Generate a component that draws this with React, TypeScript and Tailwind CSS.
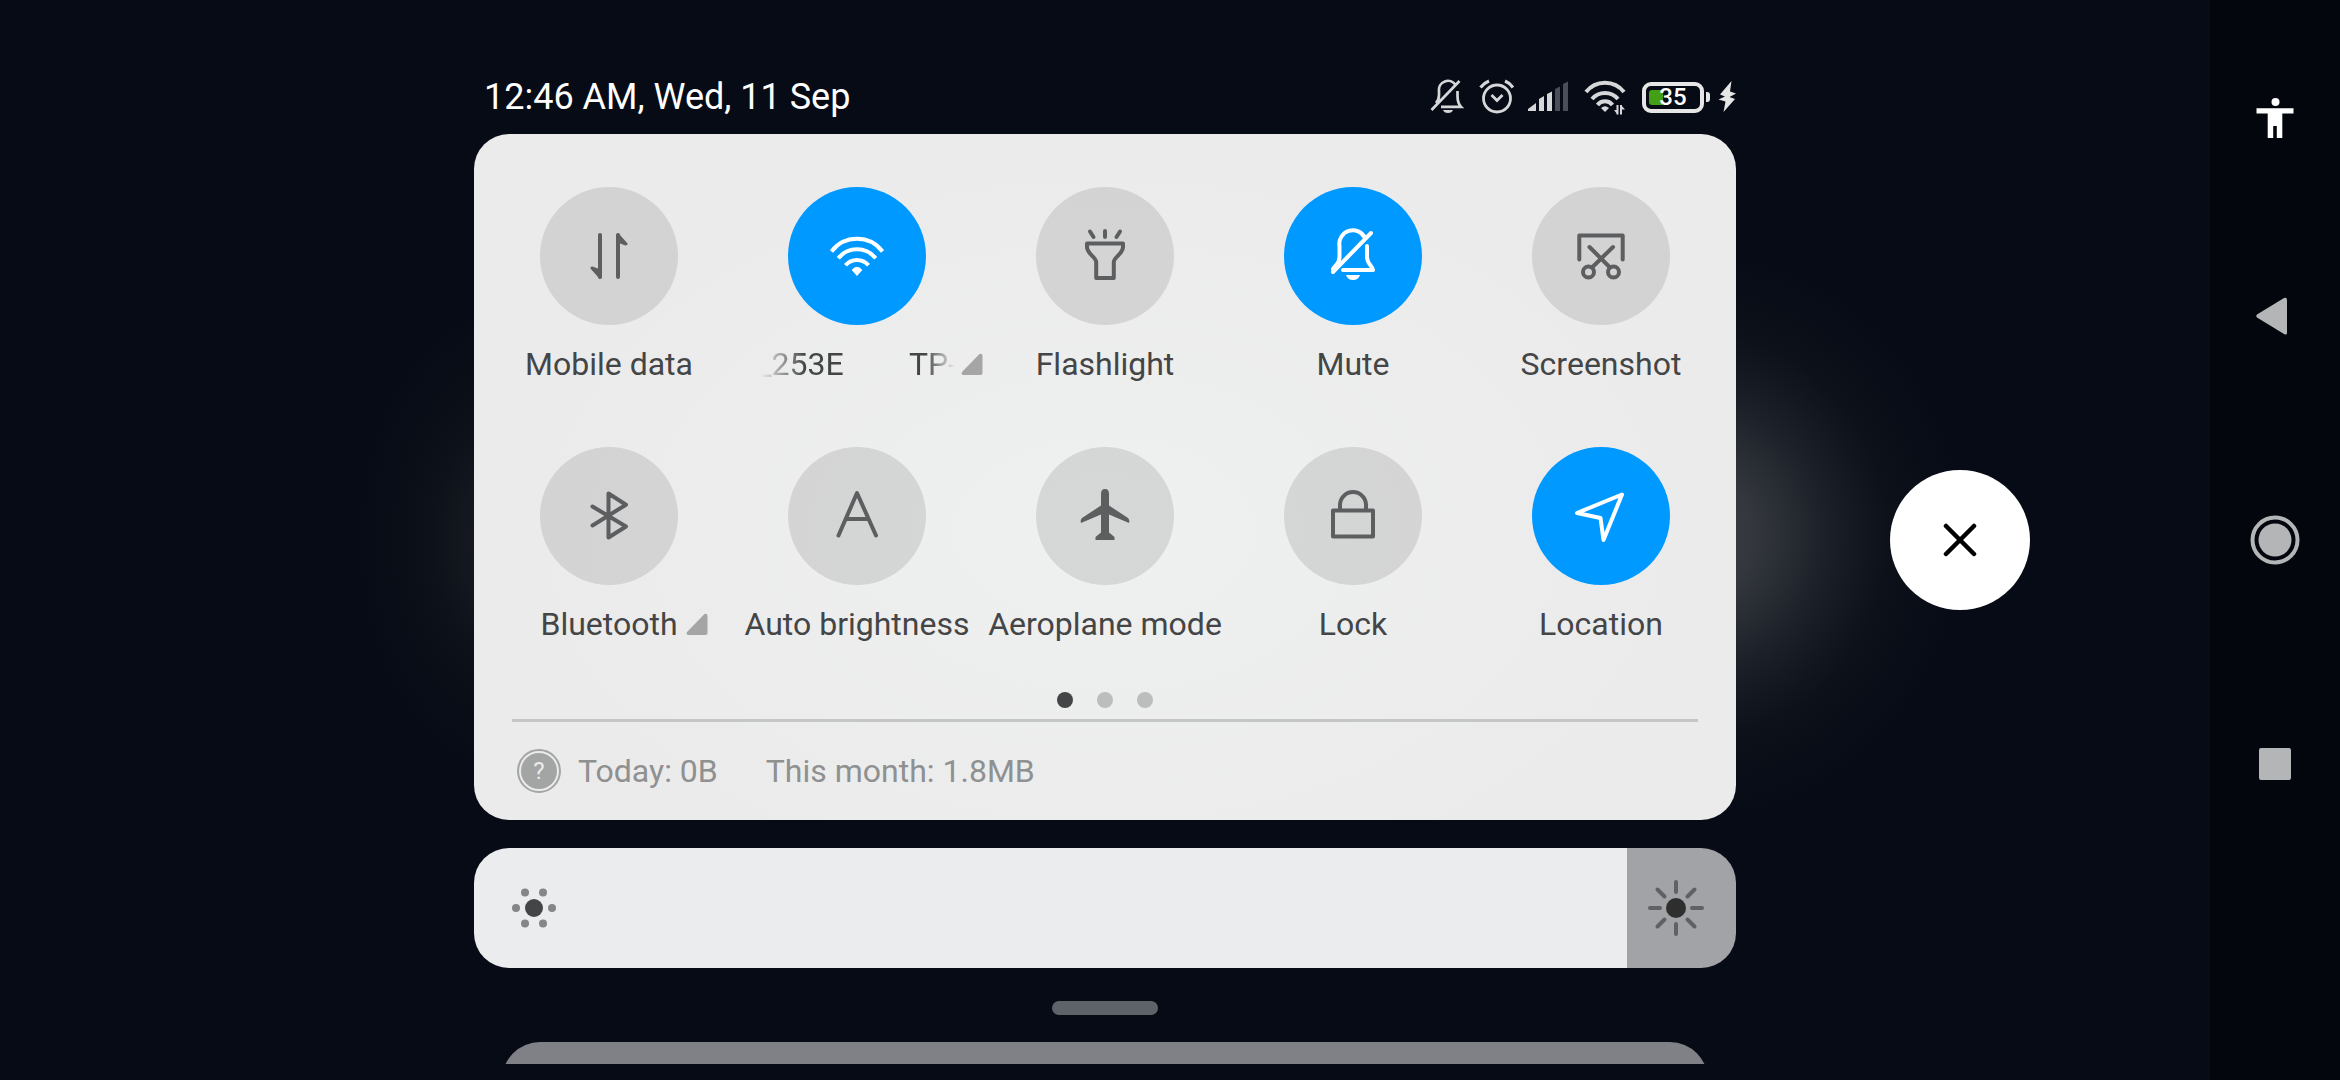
import { useState } from 'react';
import type { ReactNode } from 'react';

type Tile = {
  id: string;
  label: string;
  icon: ReactNode;
  expandable?: boolean;
};

const tiles: Tile[] = [
  {
    id: 'mobile-data',
    label: 'Mobile data',
    icon: (
      <>
        <path d="M21 9V51M39 9V51" />
        <path d="M21 51L13 42L21 45ZM39 9L47 18L39 15Z" fill="currentColor" strokeWidth="3" />
      </>
    ),
  },
  {
    id: 'wifi',
    label: 'TP-LINK_253E',
    expandable: true,
    icon: (
      <>
        <path d="M4.500 25.500A32 32 0 0 1 55.500 25.500" strokeLinecap="butt" />
        <path d="M11.300 32.300A24 24 0 0 1 48.700 32.300" strokeLinecap="butt" />
        <path d="M18.500 39.300A15 15 0 0 1 41.500 39.300" strokeLinecap="butt" />
        <path d="M24.700 44Q30 37.500 35.300 44L30 50Z" fill="currentColor" stroke="none" />
      </>
    ),
  },
  {
    id: 'flashlight',
    label: 'Flashlight',
    icon: (
      <>
        <path d="M12 17.500H48V21C48 28 38.800 31 38.800 36V52H21.200V36C21.200 31 12 28 12 21Z" />
        <path d="M15 5.500L18.500 11M30 5V11M45 5.500L41.500 11" />
      </>
    ),
  },
  {
    id: 'mute',
    label: 'Mute',
    icon: (
      <>
        <path d="M10 43C12 39 16.500 38 16.500 31V20A13.500 13.500 0 0 1 42 12" />
        <path d="M44 20V31C44 38 49.500 40 50 44H20" />
        <path d="M48 7L10 46" />
        <path d="M23 49H37Q35.500 54 30 54T23 49Z" fill="currentColor" stroke="none" />
      </>
    ),
  },
  {
    id: 'screenshot',
    label: 'Screenshot',
    icon: (
      <>
        <path d="M8.300 33.500V9.500H51.700V33.500" />
        <path d="M42 21L21 41.500M18.500 21L39 41.500" />
        <circle cx="17.500" cy="46" r="5.500" />
        <circle cx="42.500" cy="46" r="5.500" />
      </>
    ),
  },
  {
    id: 'bluetooth',
    label: 'Bluetooth',
    expandable: true,
    icon: <path d="M13.500 20.500L47 40.500L29.500 51.500V7.500L47 18.700L13.500 39.500" />,
  },
  {
    id: 'auto-brightness',
    label: 'Auto brightness',
    icon: <path d="M11.500 49.500L30 7L49 49.500M19 33H41.500" />,
  },
  {
    id: 'aeroplane',
    label: 'Aeroplane mode',
    icon: (
      <path
        d="M30 3Q34 3 34 8V19.500L53 32Q55 34 54 37L34 28.500V46.500L39.500 51V54H20.500V51L26 46.500V28.500L6 37Q5 34 7 32L26 19.500V8Q26 3 30 3Z"
        fill="currentColor"
        stroke="none"
      />
    ),
  },
  {
    id: 'lock',
    label: 'Lock',
    icon: (
      <>
        <rect x="10" y="24.500" width="40" height="26" />
        <path d="M17 24V19A13 13 0 0 1 43 19V24" />
      </>
    ),
  },
  {
    id: 'location',
    label: 'Location',
    icon: <path d="M51 8.500L6 27L29.500 32L32.500 54Z" />,
  },
];

function StatusIcons() {
  return (
    <div className="flex items-center gap-[14px] text-[#d6d7d9]">
      {/* Ringer off */}
      <svg width="34" height="36" viewBox="0 0 34 36" fill="none" stroke="currentColor" strokeWidth="2.700">
        <path d="M6 24Q9 21 9 16V12A9 9 0 0 1 25.500 6M27.500 12V17Q27.500 24 31 27.800H11M29.500 2L1.500 31" />
        <path d="M13 31H23Q22 34 18 34T13 31Z" fill="currentColor" stroke="none" />
      </svg>
      {/* Alarm */}
      <svg width="36" height="36" viewBox="0 0 36 36" fill="none" stroke="currentColor" strokeWidth="2.800">
        <circle cx="19" cy="19.500" r="13.500" />
        <path d="M13.500 16L19 21.500L24.500 16" />
        <path d="M2.500 8.500Q6 4 11 2M27 2Q32 4 35 8.500" strokeWidth="3.200" />
      </svg>
      {/* Signal strength */}
      <svg width="42" height="36" viewBox="0 0 42 36" fill="currentColor">
        <path d="M0 32V30L8 24V32ZM11 32V20L16 17V32ZM19 32V15L24 12.500V32Z" />
        <path d="M27 32V10L32 7.500V32ZM35 32V5L40 2.500V32Z" fill="#4b4e57" />
      </svg>
      {/* Wi-Fi */}
      <svg width="44" height="36" viewBox="0 0 44 36" fill="none" stroke="currentColor" strokeWidth="4">
        <path d="M2 13A24 24 0 0 1 40 13M8 20A17 17 0 0 1 34 20M13.500 26A9.500 9.500 0 0 1 28.500 26" />
        <path d="M17 29Q21 25.500 25 29L21 33Z" fill="currentColor" stroke="none" />
        <path d="M33.500 26V35.500M37 26V35.500" strokeWidth="2" />
        <path d="M33.500 35.500L30 31H33.500ZM37 26L41 30.500H37Z" fill="currentColor" stroke="none" />
      </svg>
      {/* Battery */}
      <div className="flex items-center gap-2">
        <div className="flex items-center gap-[2px]">
          <div className="relative flex h-[31px] w-[62px] items-center justify-center rounded-[9px] border-4 border-[#e6e6e7]">
            <div className="absolute inset-y-1 left-[3px] w-[14px] rounded-l-[3px] bg-[#43a016]" />
            <span className="relative font-medium text-2xl text-white">35</span>
          </div>
          <div className="h-[10px] w-1 rounded-r-[3px] bg-[#e6e6e7]" />
        </div>
        <svg width="18" height="36" viewBox="0 0 18 36" fill="#e6e6e7">
          <path d="M13.500 2L2 15.500L7 17.500L0.500 20.500L7.500 22.500L5.500 33L17 20L11.500 18L18 14.500L12 12.500Z" />
        </svg>
      </div>
    </div>
  );
}

function TileButton({ tile, active, onToggle }: { tile: Tile; active: boolean; onToggle: () => void }) {
  return (
    <div className="flex flex-col items-center">
      <button
        id={tile.id}
        onClick={onToggle}
        aria-label={tile.label}
        aria-pressed={active}
        className={`flex size-[138px] items-center justify-center rounded-full ${
          active ? 'bg-[#0099ff] text-white' : 'bg-black/10 text-[#5d5e60]'
        }`}
      >
        <svg
          width="60"
          height="60"
          viewBox="0 0 60 60"
          fill="none"
          stroke="currentColor"
          strokeWidth="4"
          strokeLinecap="round"
          strokeLinejoin="round"
        >
          {tile.icon}
        </svg>
      </button>
      <label htmlFor={tile.id} className="relative mt-[19px] whitespace-nowrap text-[32px] leading-10 text-[#444546]">
        {tile.id === 'wifi' ? (
          <span className="flex w-[200px] justify-between [mask-image:linear-gradient(to_right,transparent_4px,black_48px,black_168px,transparent_198px)]">
            <span>_253E</span>
            <span>TP-</span>
          </span>
        ) : (
          tile.label
        )}
        {tile.expandable && (
          <svg
            className={`absolute bottom-[9px] left-full ${tile.id === 'wifi' ? 'ml-1' : 'ml-2'}`}
            width="22"
            height="22"
            viewBox="0 0 22 22"
            fill="#a5a5a6"
          >
            <path d="M18.500 1Q21.500 0 21.500 3V20Q21.500 22 19.500 22H2Q-0.500 21 1.500 18.500Z" />
          </svg>
        )}
      </label>
    </div>
  );
}

function BrightnessSlider() {
  const [level, setLevel] = useState(233);
  const percent = (level / 255) * 100;

  return (
    <div className="relative mt-7">
      <input
        type="range"
        aria-label="Brightness"
        min={0}
        max={255}
        value={level}
        onChange={(e) => setLevel(Number(e.target.value))}
        className="block h-[120px] w-full appearance-none rounded-[35px] [&::-webkit-slider-thumb]:size-0 [&::-webkit-slider-thumb]:appearance-none"
        style={{ background: `linear-gradient(to right, #ebeced ${percent}%, #a2a3a6 ${percent}%)` }}
      />
      <div className="pointer-events-none absolute inset-0 flex items-center justify-between pl-[38px] pr-8">
        <svg width="44" height="44" viewBox="0 0 44 44" fill="#858687">
          <circle cx="22" cy="22" r="9" fill="#444546" />
          <circle cx="4" cy="22" r="4" />
          <circle cx="40" cy="22" r="4" />
          <circle cx="13" cy="6.500" r="4" />
          <circle cx="31" cy="6.500" r="4" />
          <circle cx="13" cy="37.500" r="4" />
          <circle cx="31" cy="37.500" r="4" />
        </svg>
        <svg width="56" height="56" viewBox="0 0 56 56" stroke="#606163" strokeWidth="4" strokeLinecap="round">
          <path d="M28 2V12M28 44V54M2 28H12M44 28H54M9.500 9.500L16.500 16.500M39.500 39.500L46.500 46.500M9.500 46.500L16.500 39.500M39.500 16.500L46.500 9.500" />
          <circle cx="28" cy="28" r="10" fill="#2e2e2f" stroke="none" />
        </svg>
      </div>
    </div>
  );
}

function NavBar() {
  return (
    <nav className="flex w-[130px] shrink-0 flex-col bg-[#03060d] pt-8 text-[#b4b5b7]">
      <button aria-label="Accessibility" className="flex h-[172px] items-center justify-center text-white">
        <svg width="38" height="40" viewBox="0 0 38 40" fill="currentColor">
          <circle cx="19.500" cy="4" r="4" />
          <path d="M0.500 10.300H37.500V15.500H26.300V40H20.800V28H17.200V40H11.700V15.500H0.500Z" />
        </svg>
      </button>
      <button aria-label="Back" className="flex h-56 items-center justify-center">
        <svg width="38" height="38" viewBox="0 0 38 38" fill="currentColor">
          <path d="M28 1Q31 0 31 3V36Q31 38.500 28 37L1 20.500Q-0.500 19 1 17.500Z" />
        </svg>
      </button>
      <button aria-label="Home" className="flex h-56 items-center justify-center">
        <svg width="50" height="50" viewBox="0 0 50 50" fill="currentColor">
          <circle cx="25" cy="25" r="22.500" fill="none" stroke="currentColor" strokeWidth="4" />
          <circle cx="25" cy="25" r="16.500" />
        </svg>
      </button>
      <button aria-label="Recent apps" className="flex h-56 items-center justify-center">
        <span className="size-8 rounded-[2px] bg-[#b4b5b7]" />
      </button>
    </nav>
  );
}

export default function App() {
  const [active, setActive] = useState<string[]>(['wifi', 'mute', 'location']);

  const toggle = (id: string) =>
    setActive(active.includes(id) ? active.filter((item) => item !== id) : [...active, id]);

  return (
    <div className="flex h-screen overflow-hidden bg-[#060b15] font-[Roboto,sans-serif]">
      <main className="relative flex-1 bg-[radial-gradient(260px_280px_at_1700px_535px,#3a3e44,#34383e_20%,#1c2028_48%,#0c111a_72%,transparent),radial-gradient(150px_230px_at_510px_540px,#1e2229,#15191f_25%,#0b1019_60%,transparent)]">
        <div className="mx-auto flex w-full max-w-[1262px] flex-col pt-[73px]">
          <header className="flex h-12 items-center justify-between pl-[10px]">
            <p className="text-4xl text-white">12:46 AM, Wed, 11 Sep</p>
            <StatusIcons />
          </header>

          {/* Quick settings */}
          <section className="mt-[13px] rounded-[35px] bg-[radial-gradient(ellipse_at_50%_58%,#eff0f0,#ebebec_65%)] pt-[53px]">
            <div className="grid grid-cols-5 gap-y-[63px] px-[11px]">
              {tiles.map((tile) => (
                <TileButton
                  key={tile.id}
                  tile={tile}
                  active={active.includes(tile.id)}
                  onToggle={() => toggle(tile.id)}
                />
              ))}
            </div>

            <div className="mt-12 flex justify-center gap-6">
              <span className="size-4 rounded-full bg-[#444546]" />
              <span className="size-4 rounded-full bg-[#bcbdbd]" />
              <span className="size-4 rounded-full bg-[#bcbdbd]" />
            </div>

            {/* Data usage */}
            <div className="mx-[38px] mt-[11px] flex h-[101px] items-center border-t-[3px] border-[#c5c6c6] pl-[5px] text-[32px] text-[#8f9090]">
              <span className="flex size-11 items-center justify-center rounded-full border-2 border-[#a3a5a4] p-[2px]">
                <span className="flex size-full items-center justify-center rounded-full bg-[#a3a5a4] text-2xl text-[#ebebec]">
                  ?
                </span>
              </span>
              <span className="ml-[17px]">Today: 0B</span>
              <span className="ml-12">This month: 1.8MB</span>
            </div>
          </section>

          <BrightnessSlider />

          <div className="mx-auto mt-[33px] h-[14px] w-[106px] rounded-full bg-[#5e6269]" />

          {/* Top of the notification sheet */}
          <div className="mx-7 mt-[27px] h-[22px] overflow-hidden">
            <div className="h-20 rounded-[38px] bg-[#808186]" />
          </div>
        </div>

        <button
          aria-label="Close"
          className="absolute right-[180px] top-1/2 flex size-[140px] -translate-y-1/2 items-center justify-center rounded-full bg-white text-black"
        >
          <svg width="34" height="34" viewBox="0 0 34 34" stroke="currentColor" strokeWidth="4.500" strokeLinecap="round">
            <path d="M3 3L31 31M31 3L3 31" />
          </svg>
        </button>
      </main>

      <NavBar />
    </div>
  );
}
